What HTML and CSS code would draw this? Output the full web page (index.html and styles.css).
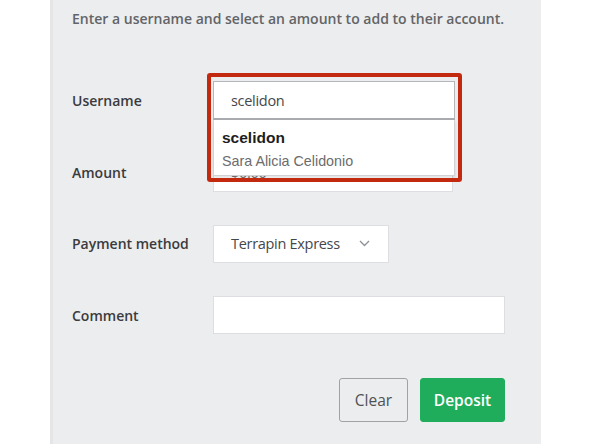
FILE: index.html
```html
<!DOCTYPE html>
<html>
<head>
<meta charset="utf-8">
<link rel="stylesheet" href="styles.css">
</head>
<body>
<div class="panel">
  <p class="intro">Enter a username and select an amount to add to their account.</p>
  <form class="form">
    <div class="row">
      <label class="label">Username</label>
      <div class="field user-field">
        <div class="input input-user">scelidon</div>
        <div class="suggest">
          <div class="suggest-user">scelidon</div>
          <div class="suggest-name">Sara Alicia Celidonio</div>
        </div>
        <div class="highlight"></div>
      </div>
    </div>
    <div class="row">
      <label class="label">Amount</label>
      <div class="field">
        <div class="input input-amount">$0.00</div>
      </div>
    </div>
    <div class="row">
      <label class="label">Payment method</label>
      <div class="field">
        <div class="input select">
          <span>Terrapin Express</span>
          <svg class="chevron" width="11" height="7" viewBox="0 0 11 7"><path d="M1 1 L5.5 5.5 L10 1" fill="none" stroke="#8f9296" stroke-width="1.4"/></svg>
        </div>
      </div>
    </div>
    <div class="row">
      <label class="label">Comment</label>
      <div class="field">
        <div class="input input-comment"></div>
      </div>
    </div>
    <div class="actions">
      <button type="button" class="btn btn-clear">Clear</button>
      <button type="button" class="btn btn-deposit">Deposit</button>
    </div>
  </form>
</div>
</body>
</html>
```

FILE: styles.css
```css
html, body {
  margin: 0;
  padding: 0;
  background: #ffffff;
}
body {
  font-family: "Open Sans", "Liberation Sans", sans-serif;
  color: #333;
}
.panel {
  margin-left: 50px;
  width: 491px;
  height: 444px;
  box-sizing: border-box;
  background: #ecedef;
  border-left: 3px solid #e4e5e7;
  padding: 9px 0 0 19px;
  overflow: hidden;
}
.intro {
  margin: 0;
  font-size: 14px;
  line-height: 20px;
  font-weight: 600;
  color: #626467;
}
.form {
  margin-top: 52px;
  display: flex;
  flex-direction: column;
  gap: 32.5px;
}
.row {
  display: flex;
  align-items: center;
  height: 39px;
}
.label {
  width: 141px;
  font-size: 14px;
  font-weight: 600;
  color: #3a3b3d;
}
.field {
  position: relative;
}
.input {
  box-sizing: border-box;
  height: 39px;
  background: #fff;
  border: 1px solid #dcdee1;
  padding-left: 17px;
  display: flex;
  align-items: center;
  font-size: 14.5px;
  letter-spacing: -0.3px;
  color: #45474a;
}
.input-user {
  width: 242px;
  border: 1px solid #b4b6b9;
  border-bottom: 2px solid #a9abae;
}
.input-amount {
  width: 240px;
  color: #777;
}
.select {
  width: 176px;
  height: 38px;
  justify-content: space-between;
  padding-right: 18px;
}
.chevron {
  display: block;
}
.input-comment {
  width: 292px;
  height: 38px;
}
.suggest {
  position: absolute;
  top: 100%;
  left: 0;
  width: 242px;
  box-sizing: border-box;
  background: #fff;
  border: 1px solid #d0d2d5;
  border-top: none;
  box-shadow: 0 2px 3px rgba(0,0,0,0.12);
  padding: 8px 0 4px 8px;
  font-family: "Liberation Sans", Arial, sans-serif;
  z-index: 2;
}
.suggest-user {
  font-weight: 700;
  font-size: 15.5px;
  line-height: 20px;
  color: #1e1e1e;
}
.suggest-name {
  font-size: 14.3px;
  line-height: 20px;
  margin-top: 3px;
  color: #6c6c6c;
}
.highlight {
  position: absolute;
  left: -6px;
  top: -8px;
  right: -7px;
  bottom: -62px;
  border: 4px solid #c3290f;
  border-radius: 3px;
  z-index: 3;
  pointer-events: none;
}
.actions {
  display: flex;
  justify-content: flex-end;
  gap: 12px;
  width: 433px;
  margin-top: 11px;
}
.btn {
  height: 44px;
  border-radius: 3px;
  font-family: "Open Sans", "Liberation Sans", sans-serif;
  font-size: 15.5px;
  padding: 0;
  cursor: pointer;
}
.btn-clear {
  width: 69px;
  background: #ecedef;
  border: 1px solid #a0a2a5;
  color: #4f5154;
}
.btn-deposit {
  width: 85px;
  background: #1fad5c;
  border: 1px solid #1fad5c;
  color: #fff;
  font-weight: 600;
}
```
